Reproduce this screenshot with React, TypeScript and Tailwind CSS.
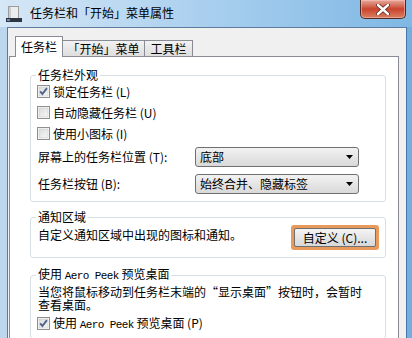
import React from "react";

const mono = "font-['Liberation_Mono',monospace] text-[11px] tracking-[-0.6px]";

function CheckBox({ checked }: { checked?: boolean }) {
  return (
    <svg width="13" height="13" viewBox="0 0 13 13" className="shrink-0">
      <defs>
        <linearGradient id="cbg" x1="0" y1="0" x2="1" y2="1">
          <stop offset="0" stopColor="#d9dbdd" />
          <stop offset="1" stopColor="#f7f7f7" />
        </linearGradient>
      </defs>
      <rect x="0.5" y="0.5" width="12" height="12" fill="#fff" stroke="#8e8f8f" />
      <rect x="2" y="2" width="9" height="9" fill="url(#cbg)" stroke="#c6c8ca" strokeWidth="0.6" />
      {checked && (
        <path d="M3.2 6.4 L5.4 9 L9.9 3.2" fill="none" stroke="#4d6185" strokeWidth="1.9" />
      )}
    </svg>
  );
}

function Check({ checked, children }: { checked?: boolean; children: React.ReactNode }) {
  return (
    <div className="flex h-[21px] items-center gap-[3px]">
      <CheckBox checked={checked} />
      <span className="leading-[16px]">{children}</span>
    </div>
  );
}

function Select({ value }: { value: string }) {
  return (
    <div className="flex h-[20px] w-[164px] items-center justify-between rounded-[3px] border border-[#707070] bg-gradient-to-b from-[#f2f2f2] to-[#d9d9d9] pl-[4px] pr-[5px]">
      <span className="leading-[16px]">{value}</span>
      <svg width="7" height="4" viewBox="0 0 7 4">
        <path d="M0 0 H7 L3.5 4 Z" fill="#000" />
      </svg>
    </div>
  );
}

function Group({ title, className, children }: { title: React.ReactNode; className?: string; children: React.ReactNode }) {
  return (
    <fieldset className={`ml-[20px] w-[356px] rounded-[3px] border border-[#d5dfe5] ${className ?? ""}`}>
      <legend className="ml-[5px] px-[2px] leading-[16px]">{title}</legend>
      {children}
    </fieldset>
  );
}

export default function App() {
  return (
    <div className="relative flex h-[338px] w-[412px] flex-col overflow-hidden bg-gradient-to-r from-[#bcd6ee] via-[#a4cbea] to-[#72aede] font-['Noto_Sans_CJK_SC',sans-serif] text-[12px] text-black">
      {/* Title bar */}
      <div className="flex h-[27px] shrink-0 items-start bg-gradient-to-r from-[#d6e7f6] via-[#a9cfee] to-[#7fb8e4]">
        <svg width="16" height="16" viewBox="0 0 16 16" className="ml-[6px] mt-[6px]">
          <rect x="2.5" y="0.5" width="10" height="12" fill="#ecedee" stroke="#9a9c9e" />
          <rect x="3" y="1" width="2" height="11" fill="#c9ccd0" />
          <rect x="0" y="12" width="16" height="4" fill="#2d3640" />
          <rect x="1" y="13" width="3" height="2" fill="#5f8fc0" />
        </svg>
        <span className="ml-[8px] mt-[5px] leading-[16px]">任务栏和「开始」菜单属性</span>
        <div className="ml-auto mr-[6px] flex h-[19px] w-[46px] items-center justify-center rounded-b-[5px] border border-t-0 border-[#4f2a24] bg-gradient-to-b from-[#e5a99c] via-[#c8432c] to-[#d97e62] shadow-[inset_0_0_0_1px_rgba(255,200,190,0.5)]">
          <svg width="14" height="11" viewBox="0 0 14 11">
            <path d="M2 1 L12 10 M12 1 L2 10" stroke="#5a2a22" strokeWidth="4" strokeLinecap="round" />
            <path d="M2 1 L12 10 M12 1 L2 10" stroke="#fff" strokeWidth="2.4" strokeLinecap="round" />
          </svg>
        </div>
      </div>

      {/* Client area */}
      <div className="ml-[7px] flex w-[400px] flex-1 flex-col border border-b-0 border-[#5d7c9d] bg-[#f0f0f0]">
        {/* Tabs */}
        <div className="relative z-10 ml-[7px] mt-[8px] flex h-[21px] items-end">
          <div className="flex h-[21px] w-[48px] items-start justify-center border border-b-0 border-[#898c95] bg-white pt-[2px] leading-[16px]">
            任务栏
          </div>
          <div className="-ml-px mb-[1px] flex h-[16px] w-[83px] items-center justify-center border border-b-0 border-[#898c95] bg-gradient-to-b from-[#f2f2f2] to-[#dedede] leading-[16px]">
            「开始」菜单
          </div>
          <div className="-ml-px mb-[1px] flex h-[16px] w-[49px] items-center justify-center border border-b-0 border-[#898c95] bg-gradient-to-b from-[#f2f2f2] to-[#dedede] leading-[16px]">
            工具栏
          </div>
        </div>

        {/* Tab panel */}
        <div className="-mt-px ml-[1px] flex w-[390px] flex-1 flex-col border border-b-0 border-[#898c95] bg-white">
          <Group title="任务栏外观" className="mt-[10px] pb-[7px]">
            <div className="-mt-[2px] pl-[6px]">
              <Check checked>锁定任务栏 (L)</Check>
              <Check>自动隐藏任务栏 (U)</Check>
              <Check>使用小图标 (I)</Check>
            </div>
            <div className="mt-[3px] flex items-center pl-[7px]">
              <span className="w-[157px] leading-[16px]">屏幕上的任务栏位置 (T):</span>
              <Select value="底部" />
            </div>
            <div className="mt-[7px] flex items-center pl-[7px]">
              <span className="w-[157px] leading-[16px]">任务栏按钮 (B):</span>
              <Select value="始终合并、隐藏标签" />
            </div>
          </Group>

          <Group title="通知区域" className="mt-[7px] pb-[7px]">
            <div className="flex items-start pl-[7px]">
              <span className="mt-[2px] leading-[16px]">自定义通知区域中出现的图标和通知。</span>
              <div className="ml-auto mr-[6px] flex h-[25px] w-[88px] items-center justify-center rounded-[3px] bg-[#e89a5c] p-[3px]">
                <div className="flex h-full w-full items-center justify-center rounded-[2px] border border-[#707070] bg-gradient-to-b from-[#f4f4f4] to-[#d8d8d8] leading-[16px]">
                  自定义 (C)...
                </div>
              </div>
            </div>
          </Group>

          <Group
            title={
              <>
                使用 <span className={mono}>Aero Peek</span> 预览桌面
              </>
            }
            className="mt-[8px] pb-[4px]"
          >
            <p className="mt-[1px] w-[335px] pl-[7px] leading-[13px]">
              当您将鼠标移动到任务栏末端的“显示桌面”按钮时，会暂时查看桌面。
            </p>
            <div className="mt-[2px] pl-[6px]">
              <Check checked>
                使用 <span className={mono}>Aero Peek</span> 预览桌面 (P)
              </Check>
            </div>
          </Group>
        </div>
      </div>
      <div className="absolute right-[5px] top-[27px] h-full w-px bg-[#4a78a8]" />
    </div>
  );
}
